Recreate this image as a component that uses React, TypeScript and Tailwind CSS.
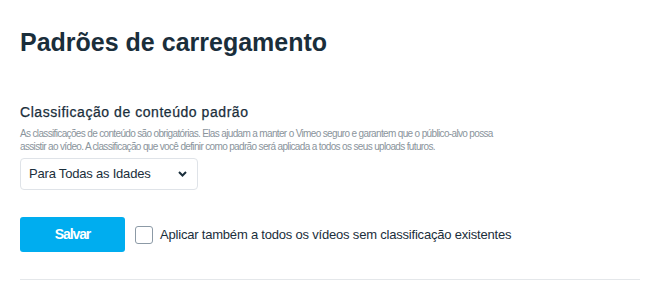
import React from "react";

const App = () => {
  return (
    <div className="w-[650px] h-[282px] bg-white font-['Liberation_Sans',Arial,sans-serif] text-[#1a2e3b] overflow-hidden">
      <div className="px-5 pt-[27px]">
        <h1 className="text-[25px] leading-[30px] font-bold">Padrões de carregamento</h1>

        <div className="mt-[47px]">
          <div className="text-[14px] leading-[16px] tracking-[0.55px] text-[#1a2e3b] [-webkit-text-stroke:0.25px_#1a2e3b]">
            Classificação de conteúdo padrão
          </div>
          <p className="mt-[7px] text-[10px] leading-[13px] tracking-[-0.65px] text-[#8a949c]">
            As classificações de conteúdo são obrigatórias. Elas ajudam a manter o Vimeo seguro e garantem que o público-alvo possa
            <br />
            assistir ao vídeo. A classificação que você definir como padrão será aplicada a todos os seus uploads futuros.
          </p>
          <div className="mt-[5px] w-[178px] h-[32px] border border-[#dfe3e8] rounded-[4px] flex items-center justify-between pl-[8px] pr-[10px] text-[13px] tracking-[-0.2px] text-[#1a2e3b]">
            <span>Para Todas as Idades</span>
            <svg width="9" height="6" viewBox="0 0 9 6" fill="none">
              <path d="M1 1l3.5 3.5L8 1" stroke="#1a2e3b" strokeWidth="2" />
            </svg>
          </div>
        </div>

        {/* Save row */}
        <div className="mt-[27px] flex items-center">
          <button className="w-[105px] h-[35px] rounded-[3px] bg-[#00adef] text-white text-[14px] font-bold tracking-[-1.1px]">
            Salvar
          </button>
          <label className="ml-[10px] flex items-center gap-[7px] text-[13px] tracking-[-0.2px] text-[#1a2e3b]">
            <span className="w-[18px] h-[18px] border border-[#8c9aa6] rounded-[3px] bg-white" />
            Aplicar também a todos os vídeos sem classificação existentes
          </label>
        </div>

        <div className="mt-[27px] border-t border-[#e4e7ea] w-[620px]" />
      </div>
    </div>
  );
};

export default App;
